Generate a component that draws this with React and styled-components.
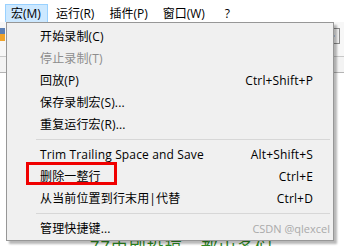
import React from 'react'
import styled, { createGlobalStyle } from 'styled-components'

const GlobalStyle = createGlobalStyle`
  html, body {
    margin: 0;
    padding: 0;
    background: #ffffff;
    overflow: hidden;
  }
  body {
    font-family: "Open Sans", "Noto Sans CJK SC", sans-serif;
    font-size: 12px;
  }
`

const Window = styled.div`
  position: relative;
  width: 344px;
  height: 246px;
  overflow: hidden;
  background: #ffffff;
`

const MenuBar = styled.div`
  display: flex;
  align-items: stretch;
  height: 22px;
  padding: 4px 0 0 5px;
  box-sizing: border-box;
  background: #ffffff;
`

const BarItem = styled.div`
  display: flex;
  align-items: center;
  padding: 0 6px 0 5px;
  margin-right: ${p => p.$gap || 0}px;
  color: #000;
  font-size: 12px;
  line-height: 1;
  border: 1px solid ${p => (p.$open ? '#99d1ff' : 'transparent')};
  border-bottom: none;
  background: ${p => (p.$open ? '#cce8ff' : 'transparent')};
`

const Toolbar = styled.div`
  display: flex;
  justify-content: space-between;
  align-items: flex-start;
  height: 35px;
  padding-top: 5px;
  box-sizing: border-box;
  border-bottom: 1px solid #c8c8c8;
  background: #f7f7f7;
`

const ToolIcon = styled.div`
  width: 14px;
  height: 14px;
  margin: 1px 4px 0 0;
  border: 1px solid #8a8a8a;
  background: #f2f2f2;
  display: flex;
  align-items: center;
  justify-content: center;
`

const TabLine = styled.div`
  height: 15px;
  border-bottom: 1px solid #b4b4b4;
  background: #f3f3f3;
`

const Editor = styled.div`
  padding: 161px 0 0 90px;
  color: #2e8b22;
  font-family: "Noto Sans CJK SC", sans-serif;
  font-size: 17px;
  letter-spacing: 1px;
  white-space: nowrap;
`

const Dropdown = styled.div`
  position: absolute;
  left: 6px;
  top: 22px;
  width: 328px;
  padding: 2px 0 1px;
  box-sizing: border-box;
  background: #f0f0f0;
  border: 1px solid #979797;
  box-shadow: 3px 3px 2px rgba(0, 0, 0, 0.28);
`

const Item = styled.div`
  position: relative;
  display: flex;
  align-items: center;
  justify-content: space-between;
  height: 22px;
  padding: 0 20px 0 33px;
  color: ${p => (p.$disabled ? '#8d8d8d' : '#000000')};
  font-size: 12px;
  letter-spacing: 0.15px;
  white-space: nowrap;
`

const Shortcut = styled.span`
  color: #000;
`

const Watermark = styled.span`
  margin: 0 -17px 0 0;
  padding-top: 1px;
  color: #aaaaaa;
  font-family: "Open Sans", sans-serif;
  font-size: 11px;
  letter-spacing: 0;
`

const Separator = styled.div`
  height: 8px;
  display: flex;
  align-items: center;
  padding: 0 3px 0 29px;
  &::after {
    content: '';
    flex: 1;
    height: 1px;
    background: #d7d7d7;
  }
`

const Highlight = styled.div`
  position: absolute;
  left: 19px;
  top: -3px;
  width: 91px;
  height: 23px;
  box-sizing: border-box;
  border: 3px solid #f00000;
  pointer-events: none;
`

const items = [
  { label: '开始录制(C)' },
  { label: '停止录制(T)', disabled: true },
  { label: '回放(P)', key: 'Ctrl+Shift+P' },
  { label: '保存录制宏(S)...' },
  { label: '重复运行宏(R)...' },
  { sep: true },
  { label: 'Trim Trailing Space and Save', key: 'Alt+Shift+S' },
  { label: '删除一整行', key: 'Ctrl+E', mark: true },
  { label: '从当前位置到行末用|代替', key: 'Ctrl+D' },
  { sep: true },
  { label: '管理快捷键...', watermark: 'CSDN @qlexcel' },
]

export default function App() {
  return (
    <Window>
      <GlobalStyle />
      <MenuBar>
        <BarItem $open $gap={2}>宏(M)</BarItem>
        <BarItem $gap={2}>运行(R)</BarItem>
        <BarItem $gap={2}>插件(P)</BarItem>
        <BarItem $gap={7}>窗口(W)</BarItem>
        <BarItem>?</BarItem>
      </MenuBar>
      <Toolbar>
        <svg width="8" height="16" viewBox="0 0 8 16">
          <rect x="-4" y="1" width="9" height="6" fill="#5b7fb5" />
          <rect x="-4" y="7" width="9" height="7" fill="#f0a32a" />
        </svg>
        <ToolIcon>
          <svg width="10" height="10" viewBox="0 0 10 10">
            <path d="M2 1 L8 5 L2 9 Z" fill="#3a7bd5" />
          </svg>
        </ToolIcon>
      </Toolbar>
      <TabLine />
      <Editor>77由刷投稿，都山多们</Editor>
      <Dropdown>
        {items.map((it, i) =>
          it.sep ? (
            <Separator key={i} />
          ) : (
            <Item key={i} $disabled={it.disabled}>
              <span>{it.label}</span>
              {it.key && <Shortcut>{it.key}</Shortcut>}
              {it.watermark && <Watermark>{it.watermark}</Watermark>}
              {it.mark && <Highlight />}
            </Item>
          )
        )}
      </Dropdown>
    </Window>
  )
}
